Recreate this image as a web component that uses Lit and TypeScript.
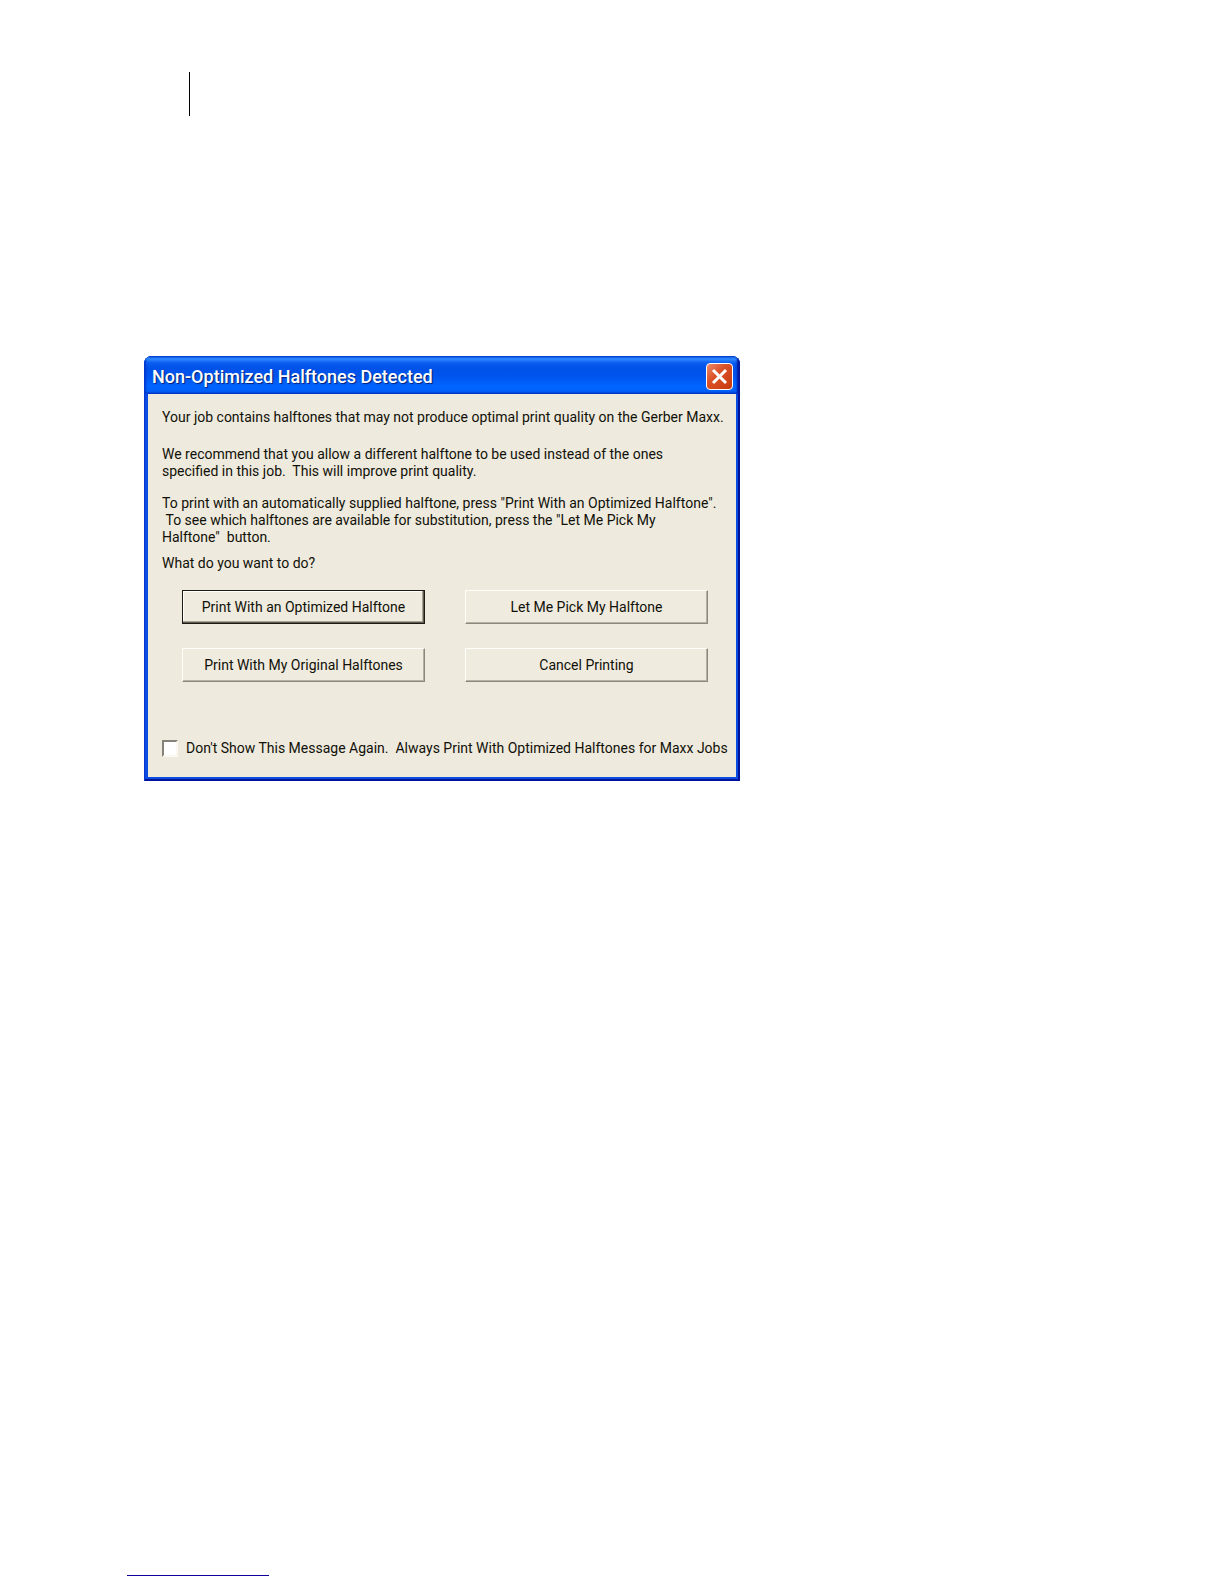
import {LitElement, html, css} from 'lit';
import {customElement, property, state} from 'lit/decorators.js';

@customElement('halftone-dialog')
export class HalftoneDialog extends LitElement {
  static styles = css`
    :host {
      display: block;
    }

    .window {
      display: flex;
      flex-direction: column;
      border-radius: 8px 8px 0 0;
      background-color: #0a4be0;
      box-shadow:
        inset 1px 0 #0a35d0,
        inset -2px -2px #00139c;
      overflow: hidden;
      color: #111108;
      font-family: Roboto, 'Liberation Sans', sans-serif;
      font-size: 14px;
      line-height: 17px;
    }

    .titlebar {
      display: flex;
      align-items: center;
      justify-content: space-between;
      height: 38px;
      box-sizing: border-box;
      padding: 3px 7px 0 8px;
      background: linear-gradient(
        to bottom,
        #0a4fdc 0,
        #2f8aff 3px,
        #0a5cf0 7px,
        #0052e8 12px,
        #0054ee 20px,
        #0064ff 30px,
        #0060fa 35px,
        #0040cc 38px
      );
      box-shadow:
        inset 2px 0 2px #0038d0,
        inset -3px 0 2px #0018a0;
    }

    .title {
      margin: 0;
      color: #fff;
      font-size: 18px;
      line-height: 20px;
      font-weight: 500;
      text-shadow: 1px 1px 1px #002078;
    }

    .close {
      display: flex;
      align-items: center;
      justify-content: center;
      width: 27px;
      height: 27px;
      padding: 0;
      border: 1px solid #fff;
      border-radius: 4px;
      background: linear-gradient(135deg, #e98b6c 0, #dc5228 40%, #c63a0c 100%);
    }

    .content {
      margin: 0 4px 4px;
      padding: 15px 4px 20px 14px;
      background-color: #eeeade;
    }

    .text {
      margin: 0;
    }

    .recommend {
      margin-top: 20px;
    }

    .explain {
      margin-top: 15px;
    }

    .question {
      margin-top: 9px;
    }

    .actions {
      display: grid;
      grid-template-columns: 1fr 1fr;
      gap: 24px 40px;
      margin: 18px 24px 0 20px;
    }

    .action {
      height: 34px;
      padding: 0;
      border: 1px solid;
      border-color: #fffef8 #8c897c #8c897c #fffef8;
      box-shadow: inset -1px -1px #b5b1a2;
      background-color: #efebdf;
      color: inherit;
      font: inherit;
    }

    .default {
      border-color: #1c1a12;
      box-shadow:
        inset -1px -1px #5c594d,
        inset -2px -2px #a8a496,
        inset 1px 1px #fffef8;
    }

    .again {
      display: flex;
      align-items: center;
      gap: 8px;
      margin-top: 58px;
    }

    .check {
      appearance: none;
      flex: none;
      width: 16px;
      height: 17px;
      margin: 0;
      border: 2px solid;
      border-color: #85827a #faf8f0 #faf8f0 #85827a;
      background-color: #fff;
    }

    .check:checked {
      background-color: #444;
    }
  `;

  @property({type: String}) heading = '';

  @state() private dontShow = false;

  private toggle(e: Event) {
    this.dontShow = (e.target as HTMLInputElement).checked;
  }

  render() {
    return html`
      <section class="window" role="dialog" aria-labelledby="title">
        <header class="titlebar">
          <h1 class="title" id="title">${this.heading}</h1>
          <button class="close" type="button" aria-label="Close">
            <svg width="17" height="17" viewBox="0 0 17 17">
              <path
                d="M2 2 L15 15 M15 2 L2 15"
                stroke="#fff"
                stroke-width="3"
                fill="none"
              />
            </svg>
          </button>
        </header>
        <div class="content">
          <p class="text">
            Your job contains halftones that may not produce optimal print
            quality on the Gerber Maxx.
          </p>
          <p class="text recommend">
            We recommend that you allow a different halftone to be used instead
            of the ones<br />specified in this job.&nbsp; This will improve
            print quality.
          </p>
          <p class="text explain">
            To print with an automatically supplied halftone, press "Print With
            an Optimized Halftone".<br />&nbsp;To see which halftones are
            available for substitution, press the "Let Me Pick My<br />Halftone"&nbsp;
            button.
          </p>
          <p class="text question">What do you want to do?</p>
          <div class="actions">
            <button class="action default" type="button">
              Print With an Optimized Halftone
            </button>
            <button class="action" type="button">Let Me Pick My Halftone</button>
            <button class="action" type="button">
              Print With My Original Halftones
            </button>
            <button class="action" type="button">Cancel Printing</button>
          </div>
          <div class="again">
            <input
              class="check"
              id="again"
              type="checkbox"
              .checked=${this.dontShow}
              @change=${this.toggle}
            />
            <label for="again"
              >Don't Show This Message Again.&nbsp; Always Print With Optimized
              Halftones for Maxx Jobs</label
            >
          </div>
        </div>
      </section>
    `;
  }
}

@customElement('app-root')
export class AppRoot extends LitElement {
  static styles = css`
    :host {
      display: block;
    }

    .page {
      display: flex;
      flex-direction: column;
      box-sizing: border-box;
      min-height: 100vh;
      padding: 72px 127px 8px;
      background-color: #fff;
    }

    .margin-rule {
      height: 44px;
      margin-left: 62px;
      border-left: 1px solid #000;
    }

    .dialog {
      width: 100%;
      max-width: 596px;
      margin: 240px 0 0 17px;
    }

    .foot-rule {
      width: 142px;
      margin: auto 0 0;
      border: 0;
      border-top: 1px solid #10009c;
    }
  `;

  render() {
    return html`
      <main class="page">
        <div class="margin-rule"></div>
        <halftone-dialog
          class="dialog"
          heading="Non-Optimized Halftones Detected"
        ></halftone-dialog>
        <hr class="foot-rule" />
      </main>
    `;
  }
}
